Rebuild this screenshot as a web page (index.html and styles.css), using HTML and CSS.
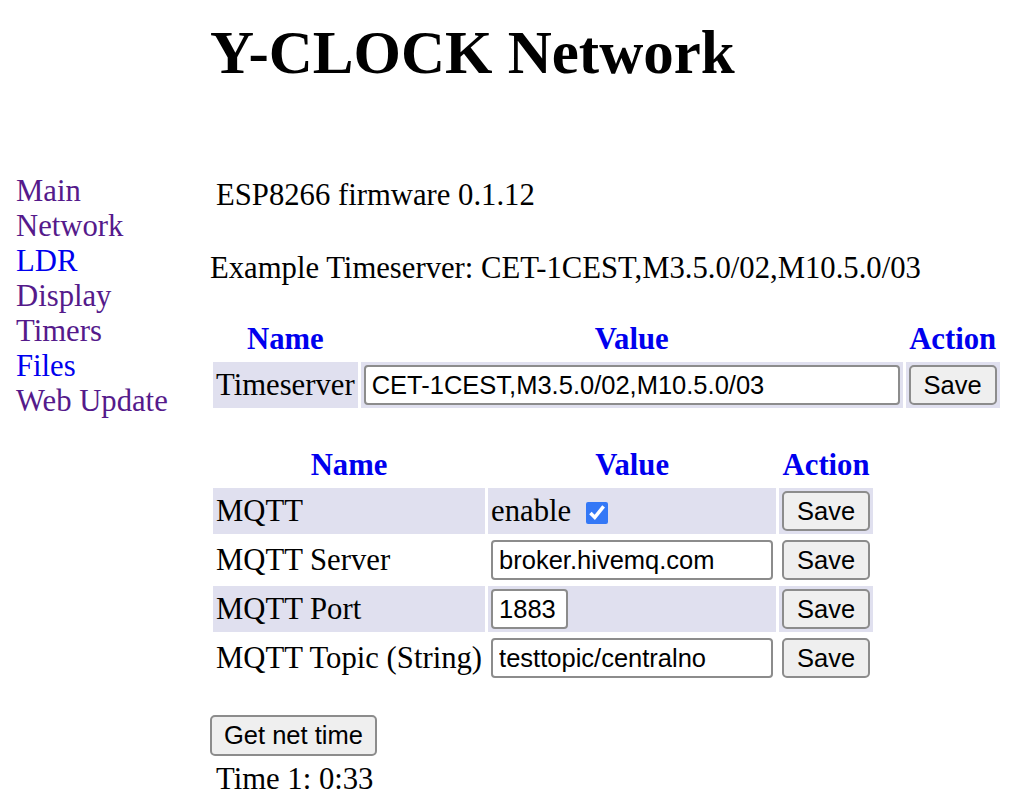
FILE: index.html
```html
<!DOCTYPE html>
<html>
<head>
    <title>Y-CLOCK Network</title>
    <link rel="stylesheet" href="styles.css">
</head>
<body>
    <div class="page">
        <h1>Y-CLOCK Network</h1>

        <div class="menu">
            <a href="#" class="visited">Main</a>
            <a href="#" class="visited">Network</a>
            <a href="#">LDR</a>
            <a href="#" class="visited">Display</a>
            <a href="#" class="visited">Timers</a>
            <a href="#">Files</a>
            <a href="#" class="visited">Web Update</a>
        </div>

        <div class="content">
            <p class="version">ESP8266 firmware 0.1.12</p>
            <p class="example">Example Timeserver: CET-1CEST,M3.5.0/02,M10.5.0/03</p>

            <table class="settings first">
                <thead>
                    <tr><th>Name</th><th>Value</th><th>Action</th></tr>
                </thead>
                <tbody>
                    <tr>
                        <td>Timeserver</td>
                        <td><input type="text" class="wide" value="CET-1CEST,M3.5.0/02,M10.5.0/03"></td>
                        <td><button class="save">Save</button></td>
                    </tr>
                </tbody>
            </table>

            <table class="settings">
                <thead>
                    <tr><th>Name</th><th>Value</th><th>Action</th></tr>
                </thead>
                <tbody>
                    <tr>
                        <td>MQTT</td>
                        <td>enable <input type="checkbox" class="check" checked></td>
                        <td><button class="save">Save</button></td>
                    </tr>
                    <tr>
                        <td>MQTT Server</td>
                        <td><input type="text" class="medium" value="broker.hivemq.com"></td>
                        <td><button class="save">Save</button></td>
                    </tr>
                    <tr>
                        <td>MQTT Port</td>
                        <td><input type="text" class="short" value="1883"></td>
                        <td><button class="save">Save</button></td>
                    </tr>
                    <tr>
                        <td>MQTT Topic (String)</td>
                        <td><input type="text" class="medium" value="testtopic/centralno"></td>
                        <td><button class="save">Save</button></td>
                    </tr>
                </tbody>
            </table>

            <button class="nettime">Get net time</button>
            <div class="time">Time 1: 0:33</div>
        </div>
    </div>
</body>
</html>
```

FILE: styles.css
```css
body {
    margin: 0;
    font-family: "Liberation Serif", "Times New Roman", serif;
    font-size: 30.7px;
    line-height: 35px;
    color: #000;
    background: #fff;
}
.page {
    display: grid;
    grid-template-columns: 210px 1fr;
}
h1 {
    grid-column: 2;
    margin: 18px 0 0;
    font-size: 61px;
    line-height: normal;
    font-weight: bold;
}
.menu {
    grid-column: 1;
    padding: 86px 0 0 16px;
}
.menu a {
    display: block;
    color: #0000ee;
    text-decoration: none;
}
.menu a.visited {
    color: #551a8b;
}
.content {
    grid-column: 2;
}
.version {
    margin: 90px 0 0;
    padding-left: 6px;
}
.example {
    margin: 38px 0 0;
}
.settings {
    border-spacing: 3px;
    margin-top: 32px;
}
.settings.first {
    margin-top: 31px;
}
.settings th {
    color: #0000ee;
    padding: 2px 3px;
}
.settings td {
    padding: 3px;
    white-space: nowrap;
}
.settings tbody tr:nth-child(odd) td {
    background-color: #e0e0ef;
}
input[type="text"] {
    box-sizing: border-box;
    height: 40px;
    padding: 0 6px;
    border: 2px solid #8c8c8c;
    border-radius: 4px;
    font-family: "Liberation Sans", Arial, sans-serif;
    font-size: 25.5px;
    vertical-align: middle;
}
.wide {
    width: 536px;
}
.medium {
    width: 282px;
}
.short {
    width: 77px;
}
.check {
    width: 22px;
    height: 22px;
    margin: 0 0 0 7px;
    accent-color: #3478f6;
    vertical-align: middle;
}
button {
    box-sizing: border-box;
    height: 40px;
    padding: 0 12px;
    background-color: #efefef;
    border: 2px solid #8c8c8c;
    border-radius: 5px;
    font-family: "Liberation Sans", Arial, sans-serif;
    font-size: 25.5px;
    color: #000;
    vertical-align: middle;
}
.save {
    width: 88px;
}
.nettime {
    display: block;
    height: 41px;
    margin: 31px 0 6px;
}
.time {
    padding-left: 6px;
}
```
